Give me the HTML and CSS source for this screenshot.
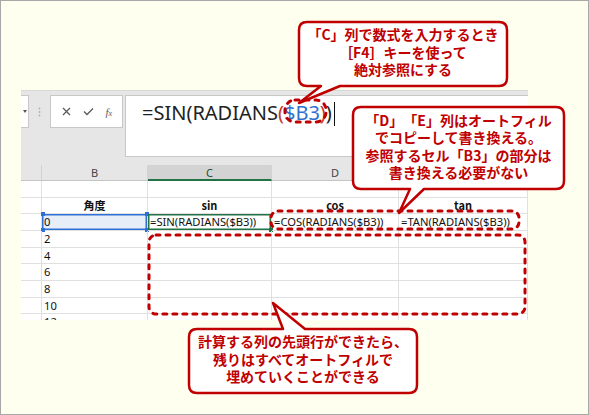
FILE: index.html
```html
<!DOCTYPE html>
<html lang="ja">
<head>
<meta charset="utf-8">
<title>Excel 絶対参照</title>
<link rel="stylesheet" href="styles.css">
</head>
<body>
<div class="frame">
  <div class="excel">
    <div class="fbar">
      <div class="namebox"><span class="caret"></span></div>
      <div class="grip">
        <svg width="3" height="10" viewBox="0 0 3 10"><circle cx="1.5" cy="1.5" r="0.9"/><circle cx="1.5" cy="5" r="0.9"/><circle cx="1.5" cy="8.5" r="0.9"/></svg>
      </div>
      <div class="fxbox">
        <svg class="ico" width="9" height="9" viewBox="0 0 9 9"><path d="M1 1 L8 8 M8 1 L1 8"/></svg>
        <svg class="ico" width="11" height="9" viewBox="0 0 11 9"><path d="M1 4.5 L4 7.5 L10 1.5"/></svg>
        <span class="fx">f<span class="fxs">x</span></span>
      </div>
      <div class="formula">=SIN(RADIANS<span class="pr">(</span><span class="ref">$B3</span><span class="pr">)</span>)<span class="cursor"></span></div>
    </div>
    <div class="sheet">
      <div class="hd"></div><div class="hd">B</div><div class="hd sel">C</div><div class="hd">D</div><div class="hd">E</div>

      <div class="c"></div><div class="c"></div><div class="c"></div><div class="c"></div><div class="c"></div>

      <div class="c"></div><div class="c b">角度</div><div class="c b">sin</div><div class="c b">cos</div><div class="c b">tan</div>

      <div class="c"></div>
      <div class="c selb">0<span class="h tl"></span><span class="h tr"></span><span class="h bl"></span><span class="h br"></span></div>
      <div class="c act">=SIN(RADIANS($B3))<span class="hg"></span></div>
      <div class="c">=COS(RADIANS($B3))</div>
      <div class="c">=TAN(RADIANS($B3))</div>

      <div class="c"></div><div class="c">2</div><div class="c"></div><div class="c"></div><div class="c"></div>
      <div class="c"></div><div class="c">4</div><div class="c"></div><div class="c"></div><div class="c"></div>
      <div class="c"></div><div class="c">6</div><div class="c"></div><div class="c"></div><div class="c"></div>
      <div class="c"></div><div class="c">8</div><div class="c"></div><div class="c"></div><div class="c"></div>
      <div class="c"></div><div class="c">10</div><div class="c"></div><div class="c"></div><div class="c"></div>
      <div class="c"></div><div class="c">12</div><div class="c"></div><div class="c"></div><div class="c"></div>
    </div>
  </div>

  <svg class="overlay" width="589" height="415" viewBox="0 0 589 415">
    <g class="dash">
      <rect x="285" y="100" width="41" height="22" rx="10"/>
      <rect x="271" y="211" width="248" height="18" rx="7"/>
      <rect x="149" y="235" width="376" height="79" rx="7"/>
    </g>
    <g class="bubble">
      <path d="M307,22 H499 Q507,22 507,30 V78 Q507,86 499,86 H340 L299,103 L321,86 H307 Q299,86 299,78 V30 Q299,22 307,22 Z"/>
      <path d="M361,107 H556 Q564,107 564,115 V181 Q564,189 556,189 H424 L399,213 L410,189 H361 Q353,189 353,181 V115 Q353,107 361,107 Z"/>
      <path d="M197,329 H283 L273,303 L305,329 H409 Q417,329 417,337 V385 Q417,393 409,393 H197 Q189,393 189,385 V337 Q189,329 197,329 Z"/>
    </g>
  </svg>

  <div class="callout c1"><p><span class="ln">「C」列で数式を入力するとき</span><span class="ln">［F4］キーを使って</span><span class="ln">絶対参照にする</span></p></div>
  <div class="callout c2"><p><span class="ln">「D」「E」列はオートフィル</span><span class="ln">でコピーして書き換える。</span><span class="ln">参照するセル「B3」の部分は</span><span class="ln">書き換える必要がない</span></p></div>
  <div class="callout c3"><p><span class="ln">計算する列の先頭行ができたら、</span><span class="ln">残りはすべてオートフィルで</span><span class="ln">埋めていくことができる</span></p></div>
</div>
</body>
</html>
```

FILE: styles.css
```css
html, body {
  margin: 0;
  padding: 0;
  background: #ffffff;
}

.frame {
  position: relative;
  width: 589px;
  height: 415px;
  box-sizing: border-box;
  border: 1px solid #a8a8a8;
  background: #fffff0;
  padding: 89px 0 0 20px;
  overflow: hidden;
}

.excel {
  width: 507px;
  height: 230px;
  overflow: hidden;
  background: #e6e6e6;
  display: flex;
  flex-direction: column;
}

.fbar {
  height: 75px;
  flex: none;
  box-sizing: border-box;
  padding-top: 5px;
  display: flex;
  align-items: flex-start;
  border-top: 1px solid #d8d8d8;
}

.namebox {
  width: 8px;
  height: 33px;
  box-sizing: border-box;
  background: #fff;
  border: 1px solid #c8c8c8;
  border-left: none;
  margin-top: -1px;
  display: flex;
  align-items: center;
  padding-left: 2px;
}

.caret {
  width: 0;
  height: 0;
  border-left: 2.5px solid transparent;
  border-right: 2.5px solid transparent;
  border-top: 3px solid #555;
}

.grip {
  width: 21px;
  height: 33px;
  display: flex;
  align-items: center;
  justify-content: center;
  margin-top: -1px;
}

.grip svg {
  fill: #b0b0b0;
}

.fxbox {
  width: 73px;
  height: 33px;
  box-sizing: border-box;
  background: #fff;
  border: 1px solid #c8c8c8;
  margin-top: -1px;
  display: flex;
  align-items: center;
  justify-content: space-around;
  padding: 0 4px 0 5px;
}

.ico {
  fill: none;
  stroke: #5a5a5a;
  stroke-width: 1.3;
}

.fx {
  font-family: "Liberation Serif", serif;
  font-style: italic;
  font-size: 11px;
  color: #5a5a5a;
}

.fxs {
  font-size: 8px;
}

.formula {
  margin-left: 2px;
  width: 403px;
  height: 62px;
  box-sizing: border-box;
  background: #fff;
  border: 1px solid #c8c8c8;
  border-right: none;
  margin-top: -1px;
  padding: 3px 0 0 16px;
  font-family: "Noto Sans", "Open Sans", sans-serif;
  font-size: 20px;
  line-height: 28px;
  color: #222;
  white-space: nowrap;
}

.pr {
  color: #c8392b;
}

.ref {
  color: #2f6fcf;
}

.cursor {
  display: inline-block;
  width: 0;
  height: 24px;
  border-left: 1.5px solid #111;
  margin-left: 2px;
  vertical-align: -6px;
}

.sheet {
  display: grid;
  grid-template-columns: 21px 106px 124px 127px 129px;
  grid-template-rows: 16px repeat(9, 16.67px);
  background: #fff;
  font-family: "Noto Sans", "Noto Sans CJK JP", sans-serif;
  font-size: 11.2px;
  color: #111;
}

.hd {
  background: #e6e6e6;
  box-sizing: border-box;
  border-right: 1px solid #d2d2d2;
  border-bottom: 1px solid #c4c4c4;
  text-align: center;
  font-size: 11px;
  line-height: 15px;
  color: #444;
}

.hd.sel {
  background: #d3d3d3;
  border-bottom: 2px solid #217346;
  color: #1f4f35;
}

.c {
  position: relative;
  box-sizing: border-box;
  border-right: 1px solid #e0e0e0;
  border-bottom: 1px solid #e0e0e0;
  padding-left: 2px;
  line-height: 15.5px;
  white-space: nowrap;
}

.c.b {
  font-weight: 700;
  text-align: center;
  padding-left: 0;
  font-family: "Noto Sans CJK JP", sans-serif;
  font-size: 11px;
}

.c.selb {
  background: #e8eef8;
  box-shadow: inset 0 0 0 1.5px #2e6fd4;
}

.c.act {
  box-shadow: inset 0 0 0 1.5px #217346;
}

.h {
  position: absolute;
  width: 4px;
  height: 4px;
  background: #2e6fd4;
}

.h.tl { left: -1px; top: -2px; }
.h.tr { right: -2px; top: -2px; }
.h.bl { left: -1px; bottom: -2px; }
.h.br { right: -2px; bottom: -2px; }

.hg {
  position: absolute;
  width: 4px;
  height: 4px;
  right: -2px;
  bottom: -2px;
  background: #217346;
}

.overlay {
  position: absolute;
  left: -1px;
  top: -1px;
  pointer-events: none;
}

.dash rect {
  fill: none;
  stroke: #c00000;
  stroke-width: 3;
  stroke-dasharray: 4 6;
  stroke-linecap: round;
}

.bubble path {
  fill: #ffffff;
  stroke: #c00000;
  stroke-width: 2.5;
  stroke-linejoin: round;
}

.callout {
  position: absolute;
  display: flex;
  align-items: center;
  justify-content: center;
  text-align: center;
  color: #c00000;
  font-family: "Noto Sans CJK JP", sans-serif;
  font-weight: 700;
  font-size: 14px;
  text-spacing-trim: space-all;
}

.callout p {
  margin: 0 0 3px 0;
  display: flex;
  flex-direction: column;
  align-items: center;
}

.ln {
  display: block;
  height: 17.5px;
  line-height: 17.5px;
  white-space: nowrap;
}

.c1 { left: 297px; top: 20px; width: 210px; height: 66px; }
.c2 { left: 351px; top: 105px; width: 213px; height: 84px; }
.c3 { left: 187px; top: 327px; width: 230px; height: 66px; }
```
